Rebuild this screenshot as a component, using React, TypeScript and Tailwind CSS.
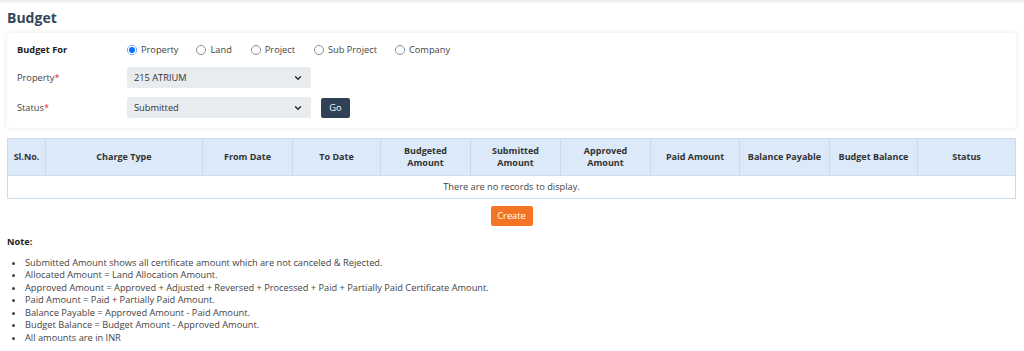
import React from 'react';
import { ChevronDown } from 'lucide-react';

const columns = [
  { label: 'Sl.No.', w: 'w-[37px]' },
  { label: 'Charge Type', w: 'w-[157px]' },
  { label: 'From Date', w: 'w-[90px]' },
  { label: 'To Date', w: 'w-[88px]' },
  { label: 'Budgeted Amount', w: 'w-[90px]' },
  { label: 'Submitted Amount', w: 'w-[90px]' },
  { label: 'Approved Amount', w: 'w-[90px]' },
  { label: 'Paid Amount', w: 'w-[89px]' },
  { label: 'Balance Payable', w: 'w-[90px]' },
  { label: 'Budget Balance', w: 'w-[88px]' },
  { label: 'Status', w: 'flex-1' },
];

const notes = [
  'Submitted Amount shows all certificate amount which are not canceled & Rejected.',
  'Allocated Amount = Land Allocation Amount.',
  'Approved Amount = Approved + Adjusted + Reversed + Processed + Paid + Partially Paid Certificate Amount.',
  'Paid Amount = Paid + Partially Paid Amount.',
  'Balance Payable = Approved Amount - Paid Amount.',
  'Budget Balance = Budget Amount - Approved Amount.',
  'All amounts are in INR',
];

const radios = [
  { label: 'Property', checked: true, gap: 'mr-[18px]' },
  { label: 'Land', checked: false, gap: 'mr-[19px]' },
  { label: 'Project', checked: false, gap: 'mr-[19px]' },
  { label: 'Sub Project', checked: false, gap: 'mr-[18px]' },
  { label: 'Company', checked: false, gap: '' },
];

function Radio({ checked }: { checked: boolean }) {
  return checked ? (
    <span className="w-[10px] h-[10px] rounded-full border border-[#0d6efd] bg-[#0d6efd] flex items-center justify-center">
      <span className="w-[6px] h-[6px] rounded-full bg-[#0d6efd] ring-[1.5px] ring-white" />
    </span>
  ) : (
    <span className="w-[10px] h-[10px] rounded-full border border-[#8a8f95] bg-white" />
  );
}

function Select({ value }: { value: string }) {
  return (
    <div className="w-[184px] h-[21px] bg-[#e9ecef] rounded-[2px] flex items-center justify-between pl-[7px] pr-[8px] text-[9.25px] text-[#333]">
      <span>{value}</span>
      <ChevronDown size={10} strokeWidth={3} className="text-[#222]" />
    </div>
  );
}

export default function App() {
  return (
    <div className="w-[1024px] h-[351px] overflow-hidden bg-white text-[#444] font-['Open_Sans',sans-serif]">
      <div className="h-[4px] bg-gradient-to-b from-[#e6e8eb] to-white" />
      <div className="px-[7px] pr-[8px]">
        <h1 className="text-[14px] font-bold text-[#34475a] leading-[20px] mt-[4px]">Budget</h1>

        {/* Filter card */}
        <div className="mt-[5px] bg-white rounded-[3px] shadow-[0_0_6px_rgba(0,0,0,0.09)] pl-[10px] pt-[7px] pb-[10px]">
          <div className="flex items-center h-[20px]">
            <span className="w-[110px] text-[9.25px] font-bold text-[#222]">Budget For</span>
            <div className="flex items-center">
              {radios.map((r) => (
                <label key={r.label} className={`flex items-center gap-[4px] text-[9.25px] text-[#444] ${r.gap}`}>
                  <Radio checked={r.checked} />
                  <span>{r.label}</span>
                </label>
              ))}
            </div>
          </div>
          <div className="flex items-center mt-[7px]">
            <span className="w-[110px] text-[9.25px] text-[#444]">
              Property<span className="text-[#d9262c]">*</span>
            </span>
            <Select value="215 ATRIUM" />
          </div>
          <div className="flex items-center mt-[9px]">
            <span className="w-[110px] text-[9.25px] text-[#444]">
              Status<span className="text-[#d9262c]">*</span>
            </span>
            <Select value="Submitted" />
            <button className="ml-[10px] w-[29px] h-[20px] bg-[#2f4154] rounded-[2px] text-white text-[9.25px]">Go</button>
          </div>
        </div>

        {/* Table */}
        <div className="mt-[10px] border border-[#ccdcec]">
          <div className="flex h-[36px] bg-[#dbe9f8]">
            {columns.map((c, i) => (
              <div
                key={c.label}
                className={`${c.w} ${i > 0 ? 'border-l border-[#c8d9ea]' : ''} flex items-center justify-center text-center text-[9px] font-bold text-[#333] leading-[12px] px-[4px]`}
              >
                {c.label}
              </div>
            ))}
          </div>
          <div className="h-[23px] border-t border-[#ccdcec] flex items-center justify-center text-[9.25px] text-[#444]">
            There are no records to display.
          </div>
        </div>

        <div className="flex justify-center mt-[7px]">
          <button className="w-[42px] h-[20px] bg-[#f47324] rounded-[2px] text-white text-[9.25px]">Create</button>
        </div>

        {/* Notes */}
        <div className="mt-[9px] text-[9.25px] font-bold text-[#222]">Note:</div>
        <ul className="mt-[8px] list-disc pl-[18px] text-[9.25px] text-[#444] leading-[12.5px]">
          {notes.map((n) => (
            <li key={n}>{n}</li>
          ))}
        </ul>
      </div>
    </div>
  );
}
